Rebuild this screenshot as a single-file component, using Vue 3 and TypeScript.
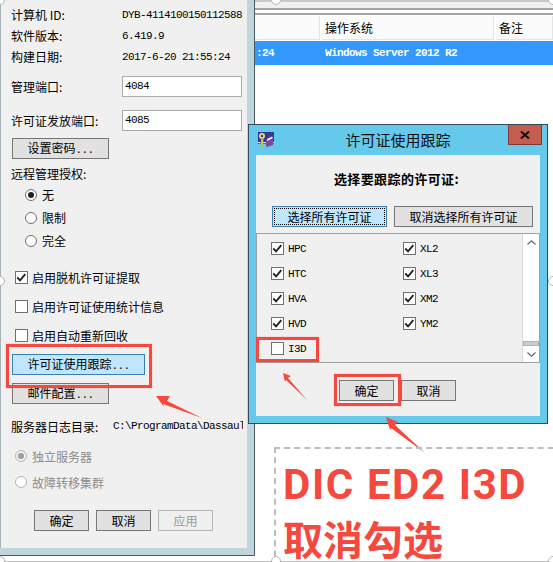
<script setup lang="ts">
import { ref } from 'vue'

interface LicenseItem {
  name: string
  checked: boolean
}

const infoRows = [
  { label: '计算机 ID:', value: 'DYB-4114100150112588' },
  { label: '软件版本:', value: '6.419.9' },
  { label: '构建日期:', value: '2017-6-20 21:55:24' }
]

const remoteModes = ['无', '限制', '完全']
const remoteMode = ref('无')

const serverOptions = ref([
  { label: '启用脱机许可证提取', checked: true },
  { label: '启用许可证使用统计信息', checked: false },
  { label: '启用自动重新回收', checked: false }
])

const leftLicenses = ref<LicenseItem[]>([
  { name: 'HPC', checked: true },
  { name: 'HTC', checked: true },
  { name: 'HVA', checked: true },
  { name: 'HVD', checked: true },
  { name: 'I3D', checked: false }
])

const rightLicenses = ref<LicenseItem[]>([
  { name: 'XL2', checked: true },
  { name: 'XL3', checked: true },
  { name: 'XM2', checked: true },
  { name: 'YM2', checked: true }
])

// 截图工具的选区手柄
const handles = [
  { x: 276, y: 0 },
  { x: 0, y: 281 },
  { x: 553, y: 281 },
  { x: 0, y: 561 },
  { x: 276, y: 561 },
  { x: 553, y: 561 },
  { x: 0, y: 0 },
  { x: 553, y: 0 }
]
</script>

<template>
  <div class="page">
    <section class="server-window">
      <div class="server-body">
        <div v-for="row in infoRows" :key="row.label" class="info-row">
          <span class="label">{{ row.label }}</span>
          <span class="mono">{{ row.value }}</span>
        </div>

        <div class="field-row first">
          <span class="label">管理端口:</span>
          <div class="input mono">4084</div>
        </div>
        <div class="field-row second">
          <span class="label">许可证发放端口:</span>
          <div class="input mono">4085</div>
        </div>
        <button class="btn wide password-btn">设置密码<span class="mono">...</span></button>

        <div class="remote-title">远程管理授权:</div>
        <div class="remote-group">
          <label v-for="mode in remoteModes" :key="mode" class="radio-row">
            <span class="radio" :class="{ on: mode === remoteMode }"></span>
            <span>{{ mode }}</span>
          </label>
        </div>

        <div class="option-group">
          <label v-for="opt in serverOptions" :key="opt.label" class="check-row">
            <span class="check">
              <svg v-if="opt.checked" viewBox="0 0 13 13" width="11" height="11">
                <path d="M1.5 6.5 L4.8 9.8 L11 2.6" fill="none" stroke="#222" stroke-width="2.2" />
              </svg>
            </span>
            <span>{{ opt.label }}</span>
          </label>
        </div>

        <button class="btn tracking-btn">许可证使用跟踪<span class="mono">...</span></button>
        <button class="btn wide mail-btn">邮件配置<span class="mono">...</span></button>

        <div class="log-row">
          <span class="label log-label">服务器日志目录:</span>
          <span class="mono log-path">C:\ProgramData\Dassaul</span>
        </div>

        <div class="mode-group">
          <label class="radio-row mode-row">
            <span class="radio on muted"></span>
            <span>独立服务器</span>
          </label>
          <label class="radio-row mode-row">
            <span class="radio muted"></span>
            <span>故障转移集群</span>
          </label>
        </div>

        <div class="footer-btns">
          <button class="btn small">确定</button>
          <button class="btn small">取消</button>
          <button class="btn small disabled">应用</button>
        </div>
      </div>
    </section>

    <section class="server-list">
      <div class="toolbar-strip"></div>
      <div class="table-head">
        <div class="head-cell col-a"></div>
        <div class="head-cell col-b">操作系统</div>
        <div class="head-cell col-c">备注</div>
      </div>
      <div class="table-row">
        <span class="col-a row-time">:24</span>
        <span class="col-b row-os">Windows Server 2012 R2</span>
      </div>
    </section>

    <!-- 许可证使用跟踪对话框 -->
    <section class="dialog">
      <header class="dialog-title">
        <svg class="dialog-icon" viewBox="0 0 16 16" width="16" height="16">
          <rect x="0" y="0" width="16" height="12" fill="#35359a" />
          <rect x="0" y="10" width="16" height="1" fill="#d9d9e8" />
          <rect x="0" y="11" width="16" height="1" fill="#c23a4a" />
          <path d="M8 8 L14 5 L15 6 L15 13 L9 15 L8 14 Z" fill="#7b4a9b" />
          <path d="M9 7 L14 4.5 L15 6 L9 9 Z" fill="#eeeef8" />
          <circle cx="4" cy="4" r="3" fill="#e8e06a" />
          <circle cx="4" cy="4" r="1.2" fill="#35359a" />
          <rect x="3" y="6" width="2.4" height="10" fill="#b9c24a" />
        </svg>
        <span class="dialog-caption">许可证使用跟踪</span>
        <span class="dialog-close">
          <svg viewBox="0 0 10 8" width="10" height="8">
            <path d="M1 0.5 L9 7.5 M9 0.5 L1 7.5" stroke="#111" stroke-width="2" />
          </svg>
        </span>
      </header>
      <div class="dialog-body">
        <div class="dialog-heading">选择要跟踪的许可证:</div>
        <div class="select-btns">
          <button class="btn select-all"><span class="focus-ring">选择所有许可证</span></button>
          <button class="btn select-none">取消选择所有许可证</button>
        </div>
        <div class="license-list">
          <div class="license-cols">
            <div class="license-col">
              <label v-for="item in leftLicenses" :key="item.name" class="license-row">
                <span class="check">
                  <svg v-if="item.checked" viewBox="0 0 13 13" width="11" height="11">
                    <path d="M1.5 6.5 L4.8 9.8 L11 2.6" fill="none" stroke="#222" stroke-width="2.2" />
                  </svg>
                </span>
                <span class="mono">{{ item.name }}</span>
              </label>
            </div>
            <div class="license-col">
              <label v-for="item in rightLicenses" :key="item.name" class="license-row">
                <span class="check">
                  <svg v-if="item.checked" viewBox="0 0 13 13" width="11" height="11">
                    <path d="M1.5 6.5 L4.8 9.8 L11 2.6" fill="none" stroke="#222" stroke-width="2.2" />
                  </svg>
                </span>
                <span class="mono">{{ item.name }}</span>
              </label>
            </div>
          </div>
          <div class="scrollbar">
            <span class="scroll-btn">
              <svg viewBox="0 0 9 5" width="9" height="5"><path d="M0.5 4.5 L4.5 0.8 L8.5 4.5" fill="none" stroke="#666" stroke-width="1.2" /></svg>
            </span>
            <span class="scroll-track"></span>
            <span class="scroll-thumb"></span>
            <span class="scroll-btn">
              <svg viewBox="0 0 9 5" width="9" height="5"><path d="M0.5 0.5 L4.5 4.2 L8.5 0.5" fill="none" stroke="#666" stroke-width="1.2" /></svg>
            </span>
          </div>
        </div>
        <div class="dialog-btns">
          <button class="btn small">确定</button>
          <button class="btn small">取消</button>
        </div>
      </div>
    </section>

    <!-- 标注层 -->
    <div class="mark mark-tracking"></div>
    <div class="mark mark-i3d"></div>
    <div class="mark mark-ok"></div>
    <svg class="arrows" viewBox="0 0 553 562" width="553" height="562">
      <polygon points="156,396 170,396 167,401 202,418 163,404 164,407" fill="#f5483f" />
      <polygon points="283,373 291,376 288,378 307,400 286,380 285,382" fill="#f5483f" />
      <polygon points="386,417 398,422 395,425 425,453 391,428 390,430" fill="#f5483f" />
    </svg>

    <div class="note">
      <div class="note-line">DIC ED2 I3D</div>
      <div class="note-line cjk">取消勾选</div>
    </div>

    <div class="select-line"></div>
    <span
      v-for="(h, i) in handles"
      :key="i"
      class="handle"
      :style="{ left: `${h.x - 5}px`, top: `${h.y - 5}px` }"
    ></span>
  </div>
</template>

<style scoped>
.page {
  position: relative;
  display: flex;
  width: 553px;
  height: 562px;
  overflow: hidden;
  background: #fff;
  color: #000;
  font-family: "Noto Sans CJK SC", "Liberation Sans", sans-serif;
  font-size: 12px;
}

.mono {
  font-family: "Liberation Mono", "Noto Sans CJK SC", monospace;
  font-size: 11px;
  letter-spacing: -0.6px;
}

/* 左侧窗口 */
.server-window {
  box-sizing: border-box;
  width: 255px;
  height: 556px;
  flex: none;
  background: #c1d5dc;
  border-right: 1px solid #4a5a64;
  border-bottom: 1px solid #4a5a64;
}

.server-body {
  box-sizing: border-box;
  display: flex;
  flex-direction: column;
  align-items: flex-start;
  width: 247px;
  height: 548px;
  padding-top: 4px;
  background: #f0f0f0;
  border-left: 1px solid #a8b4ba;
}

.info-row {
  display: flex;
  align-items: center;
  height: 21px;
  padding-left: 10px;
}

.label {
  width: 111px;
  flex: none;
}

.field-row {
  display: flex;
  align-items: center;
  padding-left: 10px;
}

.field-row.first {
  margin-top: 9px;
}

.field-row.second {
  margin-top: 13px;
}

.input {
  box-sizing: border-box;
  width: 120px;
  height: 21px;
  padding-left: 2px;
  background: #fff;
  border: 1px solid #ababab;
  line-height: 19px;
}

.btn {
  box-sizing: border-box;
  height: 21px;
  padding: 0;
  background: #e1e1e1;
  border: 1px solid #767676;
  color: #000;
  font-family: inherit;
  font-size: 12px;
  line-height: 18px;
}

.btn.wide {
  width: 97px;
  margin-left: 11px;
}

.btn.small {
  width: 55px;
}

.btn.disabled {
  background: #efefef;
  border-color: #b5b5b5;
  color: #9a9a9a;
}

.password-btn {
  margin-top: 7px;
}

.remote-title {
  margin-top: 7px;
  padding-left: 10px;
  line-height: 16px;
}

.remote-group {
  margin-top: 1px;
  padding-left: 24px;
}

.radio-row {
  display: flex;
  align-items: center;
  gap: 5px;
  height: 23px;
}

.radio {
  position: relative;
  box-sizing: border-box;
  width: 12px;
  height: 12px;
  flex: none;
  background: #fff;
  border: 1px solid #6f6f6f;
  border-radius: 50%;
}

.radio.on::after {
  content: "";
  position: absolute;
  left: 2px;
  top: 2px;
  width: 6px;
  height: 6px;
  border-radius: 50%;
  background: #222;
}

.radio.muted {
  border-color: #b4b4b4;
}

.radio.muted.on {
  background: #f0f0f0;
}

.radio.muted.on::after {
  background: #9c9c9c;
}

.option-group {
  margin-top: 11px;
  padding-left: 14px;
}

.check-row {
  display: flex;
  align-items: center;
  gap: 4px;
  height: 29px;
}

.check {
  box-sizing: border-box;
  display: flex;
  align-items: center;
  justify-content: center;
  width: 13px;
  height: 13px;
  flex: none;
  background: #fff;
  border: 1px solid #707070;
}

.tracking-btn {
  width: 133px;
  margin-top: 4px;
  margin-left: 11px;
  background: #bee6fd;
  border-color: #3c7fb1;
}

.mail-btn {
  margin-top: 8px;
}

.log-row {
  display: flex;
  align-items: center;
  margin-top: 14px;
  padding-left: 10px;
  height: 16px;
  white-space: nowrap;
}

.log-label {
  width: 102px;
}

.log-path {
  width: 130px;
  overflow: hidden;
}

.mode-group {
  margin-top: 9px;
  padding-left: 14px;
  color: #8c8c8c;
}

.mode-row {
  height: 26px;
}

.footer-btns {
  display: flex;
  gap: 7px;
  margin-top: 15px;
  margin-left: 33px;
}

/* 右侧列表 */
.server-list {
  flex: 1;
  min-width: 0;
}

.toolbar-strip {
  box-sizing: border-box;
  height: 15px;
  background:
    linear-gradient(#c8c8c8 0 2px, #f0f0f0 2px 8px, #a4a4a4 8px 10px, #fff 10px 13px, #a4a4a4 13px 15px);
}

.table-head {
  display: flex;
  height: 25px;
  background: #fff;
  gap: 2px;
  padding-top: 1px;
  box-sizing: border-box;
}

.head-cell {
  box-sizing: border-box;
  display: flex;
  align-items: center;
  height: 24px;
  padding-left: 3px;
  background: #fbfbfb;
  border-right: 1px solid #e4e4e4;
  border-bottom: 1px solid #e4e4e4;
}

.col-a {
  width: 65px;
  flex: none;
}

.col-b {
  width: 172px;
  flex: none;
}

.col-c {
  flex: 1;
}

.table-row {
  display: flex;
  align-items: center;
  gap: 2px;
  height: 24px;
  margin-top: 1px;
  background: #3399ff;
  color: #fff;
  font-family: "Liberation Mono", monospace;
  font-size: 11px;
  font-weight: 700;
  letter-spacing: -0.6px;
}

.row-time {
  padding-left: 1px;
  box-sizing: border-box;
}

.row-os {
  padding-left: 3px;
  box-sizing: border-box;
}

/* 对话框 */
.dialog {
  position: absolute;
  left: 248px;
  top: 124px;
  box-sizing: border-box;
  width: 300px;
  height: 300px;
  background: #65c9ec;
  border: 1px solid #34495a;
}

.dialog-title {
  position: relative;
  display: flex;
  align-items: center;
  justify-content: center;
  height: 30px;
}

.dialog-icon {
  position: absolute;
  left: 9px;
  top: 7px;
}

.dialog-caption {
  font-size: 15px;
  line-height: 30px;
  color: #111;
}

.dialog-close {
  position: absolute;
  left: 259px;
  top: 0;
  display: flex;
  align-items: center;
  justify-content: center;
  width: 34px;
  height: 20px;
  background: #c45c50;
  border: 1px solid #7f3a33;
  border-top: 0;
  box-sizing: border-box;
}

.dialog-body {
  box-sizing: border-box;
  display: flex;
  flex-direction: column;
  width: 284px;
  height: 261px;
  margin-left: 7px;
  background: #f0f0f0;
}

.dialog-heading {
  margin-top: 16px;
  padding-right: 3px;
  text-align: center;
  font-size: 13px;
  font-weight: 700;
  letter-spacing: 0.4px;
  line-height: 16px;
}

.select-btns {
  display: flex;
  gap: 7px;
  margin-top: 19px;
  margin-left: 16px;
}

.select-all {
  width: 115px;
  padding: 1px;
  background: #bee6fd;
  border-color: #3c7fb1;
}

.focus-ring {
  box-sizing: border-box;
  display: block;
  height: 100%;
  border: 1px dotted #000;
  line-height: 15px;
}

.select-none {
  width: 139px;
}

.license-list {
  box-sizing: border-box;
  display: flex;
  width: 284px;
  height: 130px;
  margin-top: 6px;
  border: 1px solid #a0a0a0;
}

.license-cols {
  display: flex;
  flex: 1;
  min-width: 0;
  padding-top: 2px;
  padding-left: 14px;
}

.license-col {
  flex: none;
  width: 132px;
}

.license-col + .license-col {
  flex: 1;
  width: auto;
  min-width: 0;
}

.license-row {
  display: flex;
  align-items: center;
  gap: 4px;
  height: 25px;
}

.scrollbar {
  position: relative;
  display: flex;
  flex-direction: column;
  width: 17px;
  flex: none;
  background: #fff;
  border-left: 1px solid #d8d8d8;
  box-sizing: border-box;
}

.scroll-btn {
  display: flex;
  align-items: center;
  justify-content: center;
  height: 16px;
  flex: none;
  background: #fff;
}

.scroll-track {
  flex: 1;
}

.scroll-thumb {
  height: 5px;
  flex: none;
  background: #cdcdcd;
  border: 1px solid #b0b0b0;
  box-sizing: border-box;
}

.dialog-btns {
  display: flex;
  gap: 7px;
  margin-top: 17px;
  margin-left: 83px;
}

/* 标注 */
.mark {
  position: absolute;
  box-sizing: border-box;
  border: 3px solid #f5483f;
  box-shadow: 0 0 1px rgba(245, 72, 63, 0.6);
}

.mark-tracking {
  left: 6px;
  top: 344px;
  width: 146px;
  height: 44px;
}

.mark-i3d {
  left: 256px;
  top: 337px;
  width: 63px;
  height: 25px;
}

.mark-ok {
  left: 334px;
  top: 374px;
  width: 67px;
  height: 32px;
}

.arrows {
  position: absolute;
  left: 0;
  top: 0;
  pointer-events: none;
}

.note {
  position: absolute;
  left: 274px;
  top: 447px;
  box-sizing: border-box;
  width: 290px;
  height: 120px;
  padding-left: 7px;
  border: 2px dashed #bdbdbd;
  color: #f5483f;
  font-family: "Roboto", "Noto Sans CJK SC", sans-serif;
  font-size: 42px;
  font-weight: 700;
  letter-spacing: 1.6px;
}

.note-line {
  height: 50px;
  margin-top: 11px;
  line-height: 50px;
  white-space: nowrap;
}

.note-line.cjk {
  height: 48px;
  margin-top: 4px;
  font-family: "Noto Sans CJK SC", sans-serif;
  font-size: 40px;
  letter-spacing: 0;
  line-height: 48px;
}

.select-line {
  position: absolute;
  left: 0;
  right: 0;
  bottom: 0;
  height: 1px;
  background: #bbb;
}

.handle {
  position: absolute;
  box-sizing: border-box;
  width: 10px;
  height: 10px;
  background: #fff;
  border: 1px solid #b5b5b5;
  border-radius: 50%;
}
</style>

<style>
html,
body {
  margin: 0;
  background: #fff;
}
</style>
